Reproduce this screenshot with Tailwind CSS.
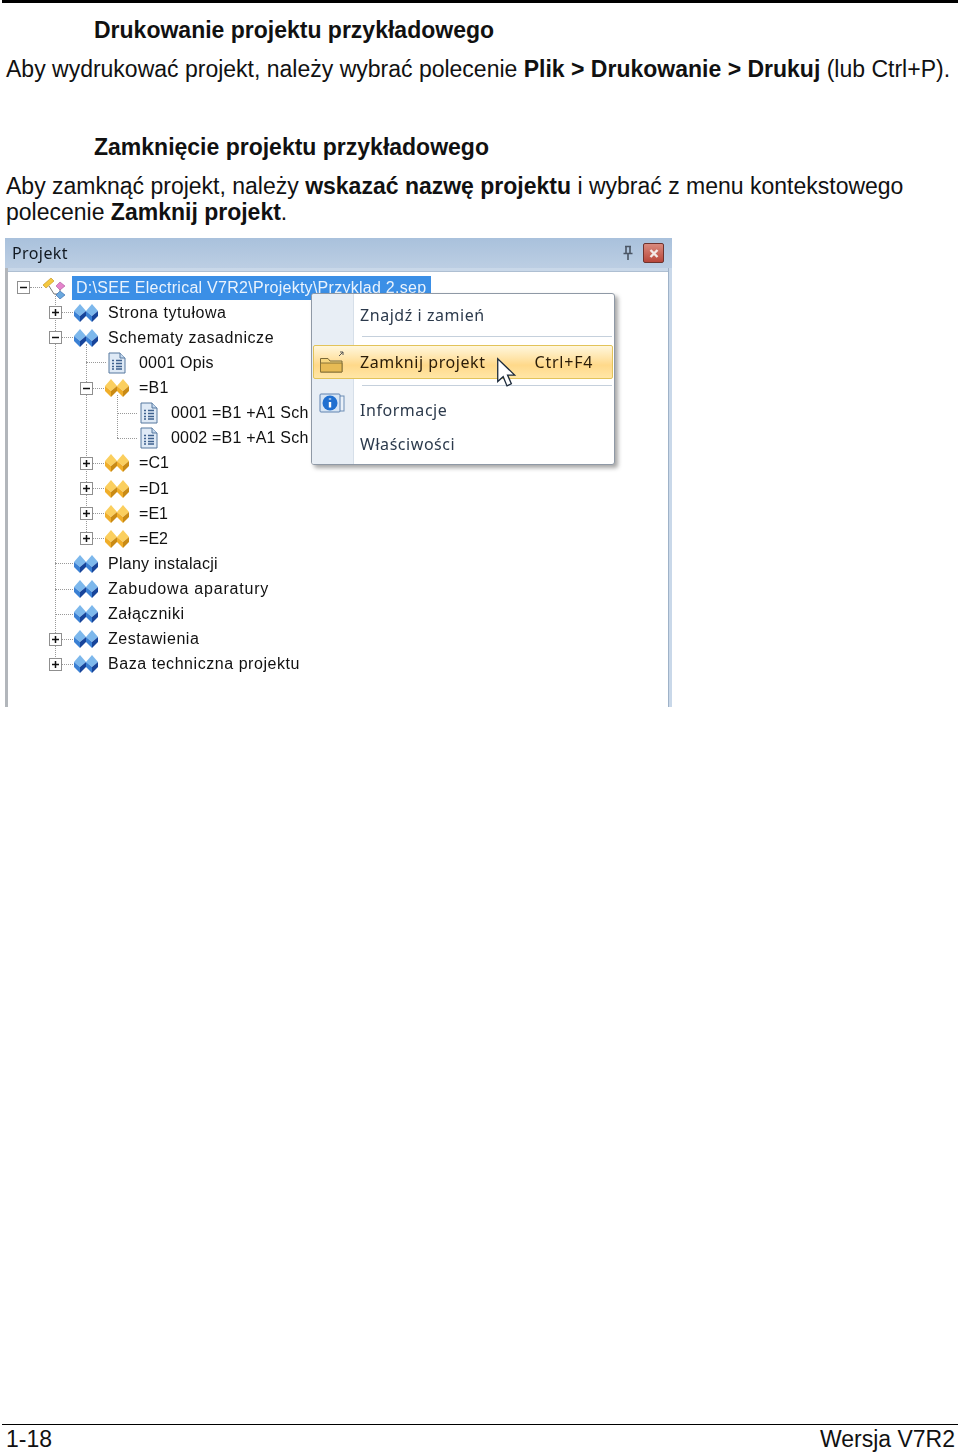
<!DOCTYPE html>
<html lang="pl">
  <head>
    <meta charset="UTF-8" />
    <title>Drukowanie i zamknięcie projektu</title>
    <script src="https://cdn.jsdelivr.net/npm/@tailwindcss/browser@4"></script>
  </head>
  <body class="bg-white">
    <!-- Icon symbols -->
    <svg class="hidden">
      <symbol id="blue" viewBox="0 0 26 18">
        <polygon points="7,0 13,7 7,12 1,7" fill="#7db8ec" />
        <polygon points="1,7 7,12 7,18 1,12" fill="#3a80d4" />
        <polygon points="13,7 7,12 7,18 13,12" fill="#17449a" />
        <polygon points="19,0 25,7 19,12 13,7" fill="#7db8ec" />
        <polygon points="13,7 19,12 19,18 13,12" fill="#3a80d4" />
        <polygon points="25,7 19,12 19,18 25,12" fill="#17449a" />
      </symbol>
      <symbol id="gold" viewBox="0 0 26 18">
        <polygon points="7,0 13,7 7,12 1,7" fill="#fbcf5e" />
        <polygon points="1,7 7,12 7,18 1,12" fill="#f0ae2a" />
        <polygon points="13,7 7,12 7,18 13,12" fill="#c98a14" />
        <polygon points="19,0 25,7 19,12 13,7" fill="#fbcf5e" />
        <polygon points="13,7 19,12 19,18 13,12" fill="#f0ae2a" />
        <polygon points="25,7 19,12 19,18 25,12" fill="#c98a14" />
      </symbol>
      <symbol id="doc" viewBox="0 0 18 22">
        <path d="M1 1H12L17 6V21H1Z" fill="#dfeaf6" stroke="#56789f" />
        <path d="M12 1V6H17" fill="#c4d8ee" stroke="#56789f" />
        <path d="M4 8.5H6M8 8.5H14M4 11.5H6M8 11.5H14M4 14.5H6M8 14.5H14M4 17H6M8 17H14" stroke="#3f628f" stroke-width="1.4" />
      </symbol>
      <symbol id="plus" viewBox="0 0 13 13">
        <rect x="0.5" y="0.5" width="12" height="12" fill="#fff" stroke="#8f8f8f" />
        <path d="M3 6.5H10M6.5 3V10" stroke="#111" stroke-width="1.5" />
      </symbol>
      <symbol id="minus" viewBox="0 0 13 13">
        <rect x="0.5" y="0.5" width="12" height="12" fill="#fff" stroke="#8f8f8f" />
        <path d="M3 6.5H10" stroke="#111" stroke-width="1.5" />
      </symbol>
    </svg>

    <div class="w-[960px] h-[1454px] flex flex-col font-['Liberation_Sans',Arial,sans-serif] text-[#111]">
      <div class="mx-[2px] h-[3px] bg-black"></div>

      <!-- Text -->
      <h2 class="mt-[14px] ml-[94px] text-[23px] leading-[26px] font-bold">Drukowanie projektu przykładowego</h2>
      <p class="mt-[13px] ml-[6px] text-[23px] leading-[26px] whitespace-nowrap">Aby wydrukować projekt, należy wybrać polecenie <b>Plik &gt; Drukowanie &gt; Drukuj</b> (lub Ctrl+P).</p>
      <h2 class="mt-[52px] ml-[94px] text-[23px] leading-[26px] font-bold">Zamknięcie projektu przykładowego</h2>
      <p class="mt-[13px] ml-[6px] w-[930px] text-[23px] leading-[26px]">Aby zamknąć projekt, należy <b>wskazać nazwę projektu</b> i wybrać z menu kontekstowego polecenie <b>Zamknij projekt</b>.</p>

      <!-- Screenshot panel -->
      <div class="mt-[13px] ml-[5px] w-[667px] h-[469px] flex flex-col relative overflow-hidden blur-[0.6px]">
        <div class="h-[30px] shrink-0 flex items-center justify-between pl-[7px] pr-[8px] bg-gradient-to-b from-[#a9c1dc] to-[#bccee3]">
          <span class="text-[16px] tracking-[0.4px] text-[#111820] font-['Noto_Sans',sans-serif]">Projekt</span>
          <div class="flex items-center gap-[9px]">
            <svg width="12" height="16" viewBox="0 0 12 16"><path d="M3 1.5H9M4 1.5V8.5M8 1.5V8.5M1.5 8.5H10.5M6 8.5V15" fill="none" stroke="#4a5564" stroke-width="1.6" /></svg>
            <div class="w-[21px] h-[20px] flex items-center justify-center rounded-[2px] border border-[#6e332e] bg-gradient-to-b from-[#d98a7e] to-[#b8463a]">
              <svg width="10" height="9" viewBox="0 0 10 9"><path d="M1.5 1L8.5 8M8.5 1L1.5 8" stroke="#f3e9e6" stroke-width="2.4" /></svg>
            </div>
          </div>
        </div>
        <div class="flex-1 flex min-h-0 bg-[#c9d8e9]">
          <div class="w-[3px] bg-[#b2b6bb]"></div>
          <div class="flex-1 mt-[3px] bg-white border-t border-[#aebfd2] relative text-[16px] tracking-[0.55px] text-[#111]">
            <!-- Tree connectors -->
            <div class="absolute left-[46.5px] top-[22px] h-[369px] border-l border-dotted border-[#999]"></div>
            <div class="absolute left-[78px] top-[72px] h-[194px] border-l border-dotted border-[#999]"></div>
            <div class="absolute left-[109px] top-[123px] h-[43px] border-l border-dotted border-[#999]"></div>

            <div class="pt-[3px]">
              <!-- root -->
              <div class="flex items-center h-[25.13px] pl-[9px]">
                <svg class="relative" width="13" height="13"><use href="#minus" /></svg>
                <span class="w-[12px] border-t border-dotted border-[#999]"></span>
                <svg width="25" height="22" viewBox="0 0 25 22" class="shrink-0">
                  <path d="M7 9L12 17H16M18 11V14" stroke="#777" stroke-width="1" fill="none" />
                  <polygon points="9,1 12,4 4,11 1,8" fill="#f4c840" stroke="#c08d18" stroke-width="0.6" />
                  <polygon points="18,5 23,9 18,13 14,9" fill="#e583cc" stroke="#a8559a" stroke-width="0.6" />
                  <polygon points="18,14 23,18 18,22 14,18" fill="#6aa8de" stroke="#2e62a8" stroke-width="0.6" />
                </svg>
                <span class="ml-[5px] w-[359px] h-[24px] pl-[4px] flex items-center bg-[#3b8fe6] text-[#eaf3fd] tracking-[0.27px] whitespace-nowrap">D:\SEE Electrical V7R2\Projekty\Przyklad 2.sep</span>
              </div>
              <!-- level 1 -->
              <div class="flex items-center h-[25.13px] pl-[41px]"><svg class="relative shrink-0" width="13" height="13"><use href="#plus" /></svg><span class="w-[11px] border-t border-dotted border-[#999]"></span><svg width="26" height="18"><use href="#blue" /></svg><span class="ml-[9px]">Strona tytułowa</span></div>
              <div class="flex items-center h-[25.13px] pl-[41px]"><svg class="relative shrink-0" width="13" height="13"><use href="#minus" /></svg><span class="w-[11px] border-t border-dotted border-[#999]"></span><svg width="26" height="18"><use href="#blue" /></svg><span class="ml-[9px]">Schematy zasadnicze</span></div>
              <!-- level 2 -->
              <div class="flex items-center h-[25.13px] pl-[78px]"><span class="w-[20px] border-t border-dotted border-[#999]"></span><svg class="ml-[2px]" width="18" height="22"><use href="#doc" /></svg><span class="ml-[13px] tracking-[0.2px]">0001 Opis</span></div>
              <div class="flex items-center h-[25.13px] pl-[72px]"><svg class="relative shrink-0" width="13" height="13"><use href="#minus" /></svg><span class="w-[11px] border-t border-dotted border-[#999]"></span><svg width="26" height="18"><use href="#gold" /></svg><span class="ml-[9px] tracking-[0.2px]">=B1</span></div>
              <!-- level 3 -->
              <div class="flex items-center h-[25.13px] pl-[109px]"><span class="w-[20px] border-t border-dotted border-[#999]"></span><svg class="ml-[3px]" width="18" height="22"><use href="#doc" /></svg><span class="ml-[13px] tracking-[0.2px] whitespace-nowrap">0001 =B1 +A1 Sch</span></div>
              <div class="flex items-center h-[25.13px] pl-[109px]"><span class="w-[20px] border-t border-dotted border-[#999]"></span><svg class="ml-[3px]" width="18" height="22"><use href="#doc" /></svg><span class="ml-[13px] tracking-[0.2px] whitespace-nowrap">0002 =B1 +A1 Sch</span></div>
              <!-- level 2 collapsed -->
              <div class="flex items-center h-[25.13px] pl-[72px]"><svg class="relative shrink-0" width="13" height="13"><use href="#plus" /></svg><span class="w-[11px] border-t border-dotted border-[#999]"></span><svg width="26" height="18"><use href="#gold" /></svg><span class="ml-[9px] tracking-[0.05px]">=C1</span></div>
              <div class="flex items-center h-[25.13px] pl-[72px]"><svg class="relative shrink-0" width="13" height="13"><use href="#plus" /></svg><span class="w-[11px] border-t border-dotted border-[#999]"></span><svg width="26" height="18"><use href="#gold" /></svg><span class="ml-[9px] tracking-[0.05px]">=D1</span></div>
              <div class="flex items-center h-[25.13px] pl-[72px]"><svg class="relative shrink-0" width="13" height="13"><use href="#plus" /></svg><span class="w-[11px] border-t border-dotted border-[#999]"></span><svg width="26" height="18"><use href="#gold" /></svg><span class="ml-[9px] tracking-[0.05px]">=E1</span></div>
              <div class="flex items-center h-[25.13px] pl-[72px]"><svg class="relative shrink-0" width="13" height="13"><use href="#plus" /></svg><span class="w-[11px] border-t border-dotted border-[#999]"></span><svg width="26" height="18"><use href="#gold" /></svg><span class="ml-[9px] tracking-[0.05px]">=E2</span></div>
              <!-- level 1 rest -->
              <div class="flex items-center h-[25.13px] pl-[47px]"><span class="w-[18px] border-t border-dotted border-[#999]"></span><svg width="26" height="18"><use href="#blue" /></svg><span class="ml-[9px] tracking-[0.25px]">Plany instalacji</span></div>
              <div class="flex items-center h-[25.13px] pl-[47px]"><span class="w-[18px] border-t border-dotted border-[#999]"></span><svg width="26" height="18"><use href="#blue" /></svg><span class="ml-[9px] tracking-[0.8px]">Zabudowa aparatury</span></div>
              <div class="flex items-center h-[25.13px] pl-[47px]"><span class="w-[18px] border-t border-dotted border-[#999]"></span><svg width="26" height="18"><use href="#blue" /></svg><span class="ml-[9px]">Załączniki</span></div>
              <div class="flex items-center h-[25.13px] pl-[41px]"><svg class="relative shrink-0" width="13" height="13"><use href="#plus" /></svg><span class="w-[11px] border-t border-dotted border-[#999]"></span><svg width="26" height="18"><use href="#blue" /></svg><span class="ml-[9px]">Zestawienia</span></div>
              <div class="flex items-center h-[25.13px] pl-[41px]"><svg class="relative shrink-0" width="13" height="13"><use href="#plus" /></svg><span class="w-[11px] border-t border-dotted border-[#999]"></span><svg width="26" height="18"><use href="#blue" /></svg><span class="ml-[9px]">Baza techniczna projektu</span></div>
            </div>

            <!-- Context menu -->
            <div class="absolute left-[303px] top-[21px] w-[304px] h-[172px] flex flex-col bg-white border border-[#8f99a6] rounded-[3px] shadow-[3px_3px_4px_rgba(60,60,60,0.45)] font-['Noto_Sans',sans-serif] text-[16px] tracking-[0.55px] text-[#2c3a4c] overflow-hidden">
              <div class="absolute left-0 top-0 bottom-0 w-[42px] bg-[#e8eef5] border-r border-[#d6dfe9]"></div>
              <div class="relative h-[42px] shrink-0 flex items-center pl-[48px]">Znajdź i zamień</div>
              <div class="relative ml-[50px] mr-[2px] h-px bg-[#c5d0dc]"></div>
              <div class="relative mt-[8px] mx-[1px] h-[34px] shrink-0 flex items-center rounded-[2px] border border-[#e2c35a] bg-gradient-to-b from-[#fff7dc] via-[#ffd98a] via-60% to-[#ffe6a6] text-[#2a1c08]">
                <svg class="absolute left-[4px] top-[3px]" width="28" height="26" viewBox="0 0 28 26">
                  <path d="M2.5 9.5H10L12 12H24V23H2.5Z" fill="#f6d67e" stroke="#7b6a3a" />
                  <path d="M2.5 14H24V23H2.5Z" fill="#e7bb55" stroke="#8a7436" />
                  <path d="M21 7L25 3M25 3H22M25 3V6" stroke="#555" fill="none" />
                </svg>
                <span class="ml-[46px]">Zamknij projekt</span>
                <span class="ml-[49px] tracking-[0.8px]">Ctrl+F4</span>
              </div>
              <div class="relative mt-[6px] ml-[50px] mr-[2px] h-px bg-[#c5d0dc]"></div>
              <div class="relative mt-[7px] h-[34px] shrink-0 flex items-center pl-[48px]">
                <svg class="absolute left-[7px] top-[-1px]" width="26" height="24" viewBox="0 0 26 24">
                  <rect x="8" y="4" width="17" height="15" fill="#eaf1f9" stroke="#6d8db5" />
                  <rect x="1" y="2" width="20" height="18" rx="1" fill="#d7e5f4" stroke="#5e82b0" />
                  <circle cx="11" cy="11" r="7.5" fill="#1f6fd0" />
                  <path d="M11 6.5V7.5M11 10V15.5" stroke="#fff" stroke-width="2.4" />
                </svg>
                Informacje
              </div>
              <div class="relative h-[34px] shrink-0 flex items-center pl-[48px]">Właściwości</div>
            </div>

            <!-- Mouse cursor -->
            <svg class="absolute left-[487px] top-[85px]" width="24" height="35" viewBox="0 0 22 32">
              <path d="M2.5 1.5V22.5L7.5 18L11 26.5L15 24.5L11.5 16.5H18Z" fill="#fff" stroke="#1d2b3c" stroke-width="1.2" />
            </svg>
          </div>
          <div class="w-[4px] bg-[#c9d8e9] border-l border-[#9fb2c8]"></div>
        </div>
      </div>

      <!-- Footer -->
      <div class="mt-auto mx-[2px] border-t border-black h-[30px] flex items-center justify-between pl-[4px] pr-[3px] text-[23px]">
        <span>1-18</span>
        <span>Wersja V7R2</span>
      </div>
    </div>
  </body>
</html>
